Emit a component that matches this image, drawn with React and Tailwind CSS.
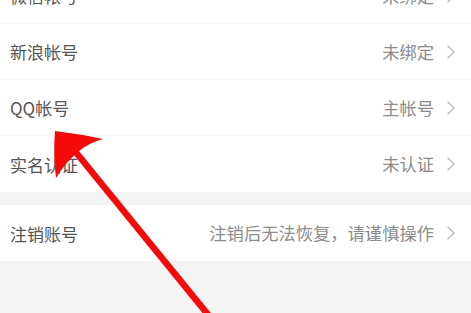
import React from 'react';
import { ChevronRight } from 'lucide-react';

const font = { fontFamily: '"Noto Sans CJK SC", "Noto Sans", sans-serif' };

const Row = ({ label, value, last }) => (
  <div className={`flex items-center justify-between h-[56px] pl-[10px] pr-[8px] bg-white ${last ? '' : 'border-b border-[#f9f9f9]'}`}>
    <span className="text-[17px] text-[#555555] leading-none">{label}</span>
    <div className="flex items-center gap-[5px]">
      <span className="text-[17.3px] text-[#8c8c8c] leading-none">{value}</span>
      <ChevronRight size={24} strokeWidth={1.3} className="text-[#b8b8b8]" />
    </div>
  </div>
);

export default function App() {
  const accounts = [
    { label: '微信帐号', value: '未绑定' },
    { label: '新浪帐号', value: '未绑定' },
    { label: 'QQ帐号', value: '主帐号' },
    { label: '实名认证', value: '未认证' },
  ];

  return (
    <div className="relative w-[471px] h-[313px] overflow-hidden bg-[#f4f4f4]" style={font}>
      <div className="-mt-[32px]">
        {accounts.map((a, i) => (
          <Row key={i} label={a.label} value={a.value} last={i === accounts.length - 1} />
        ))}
      </div>
      <div className="mt-[13px]">
        <Row label="注销账号" value="注销后无法恢复，请谨慎操作" last />
      </div>

      {/* red annotation arrow */}
      <svg className="absolute left-0 top-0 pointer-events-none" width="471" height="313" viewBox="0 0 471 313">
        <line x1="74" y1="150" x2="214" y2="322" stroke="#f50a0a" strokeWidth="6.5" />
        <path d="M55,131 Q80,134 103,139 Q88,143 78,152 Q65,163 56,178 Q53,155 55,131 Z" fill="#f50a0a" />
      </svg>
    </div>
  );
}
